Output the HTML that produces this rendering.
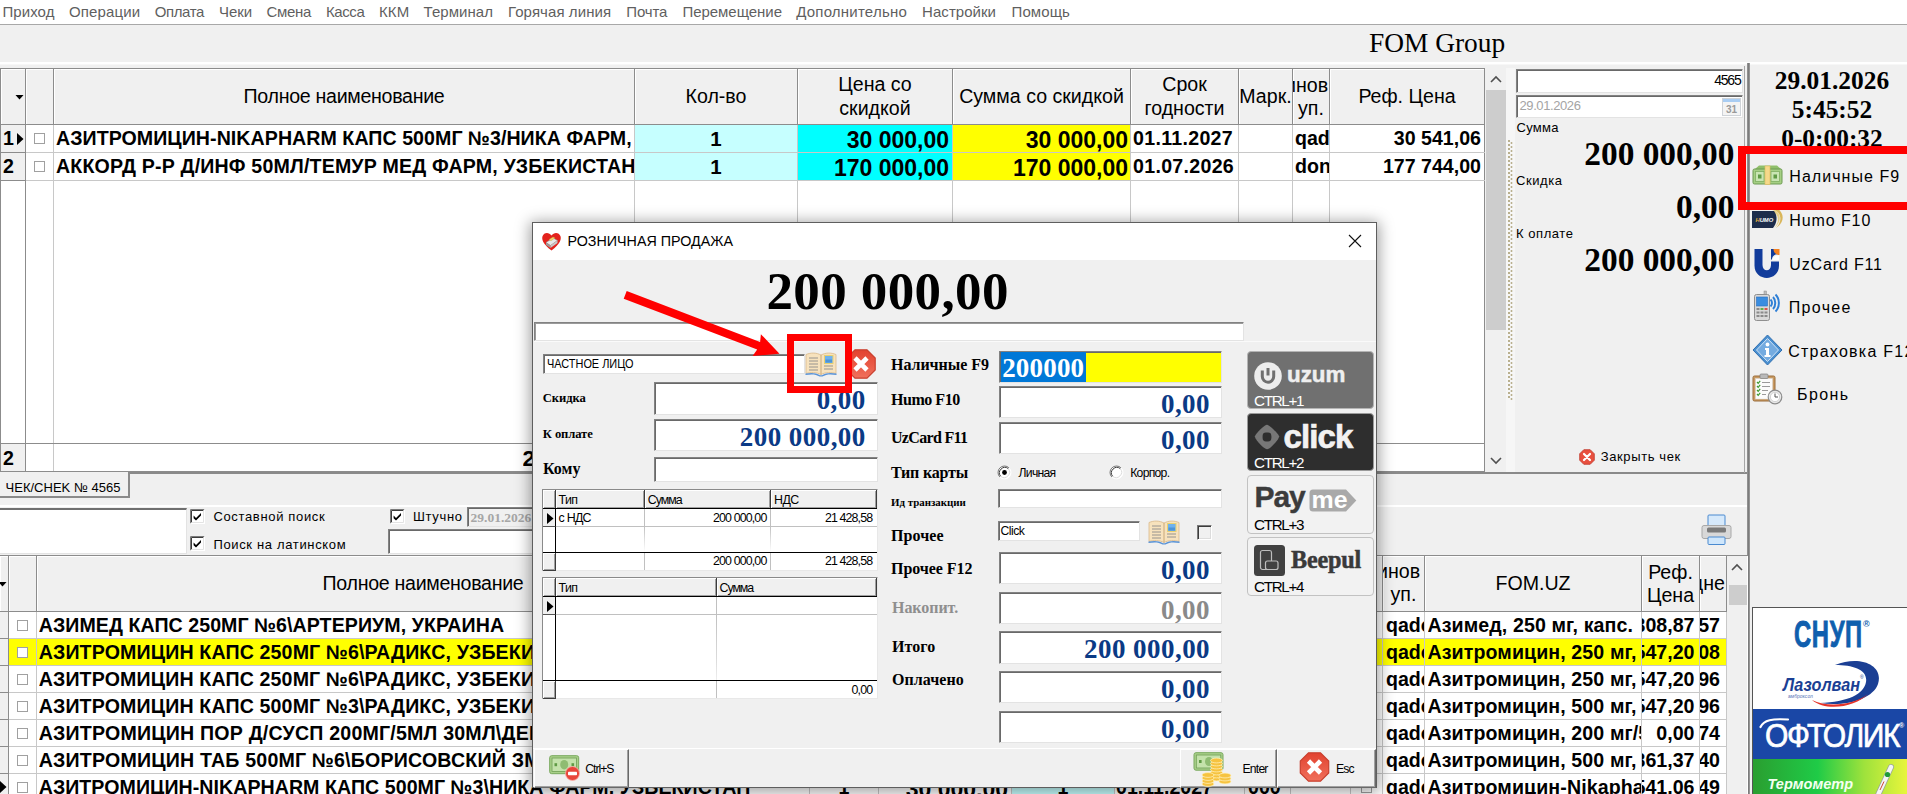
<!DOCTYPE html>
<html>
<head>
<meta charset="utf-8">
<title>FOM</title>
<style>
*{box-sizing:border-box;margin:0;padding:0}
html,body{width:1907px;height:794px;overflow:hidden;background:#f0f0f0;font-family:"Liberation Sans",sans-serif;color:#000;font-size:14px;line-height:1}
.a{position:absolute}
.t{position:absolute;white-space:pre;line-height:1}
.ser{font-family:"Liberation Serif",serif;font-weight:bold}
.sunk{position:absolute;background:#fff;border:1px solid;border-color:#828282 #e3e3e3 #e3e3e3 #828282;box-shadow:inset 1px 1px 0 #696969}
.vl{position:absolute;width:1px;background:#c8c8c8}
.hl{position:absolute;height:1px;background:#c8c8c8}
.hd{position:absolute;background:#f0f0f0;border-right:1px solid #8c8c8c;border-bottom:1px solid #8c8c8c;box-shadow:inset 1px 1px 0 #fff;text-align:center;font-size:19.6px;line-height:29px;display:flex;align-items:center;justify-content:center;overflow:hidden;white-space:pre}
.cb{position:absolute;width:11px;height:11px;border:1px solid #a0a0a0;background:#fff}
.ck{position:absolute;width:13px;height:13px;border:1px solid #333;background:#fff}
.row{position:absolute;font-weight:bold;font-size:19.6px;white-space:pre;line-height:28px;height:28px;overflow:hidden}
.tah{font-size:14px;letter-spacing:.35px}
.m{position:absolute;top:3px;font-size:15px;line-height:17px;color:#5f5f5f;white-space:pre}
</style>
</head>
<body>
<div class="a" style="left:0;top:0;width:1907px;height:24px;background:#fff"></div>
<div class="a" style="left:0;top:24px;width:1907px;height:1px;background:#a8a8a8"></div>
<div class="m" style="left:2.5px;letter-spacing:0.07px">Приход</div>
<div class="m" style="left:68.9px;letter-spacing:0.15px">Операции</div>
<div class="m" style="left:154.7px;letter-spacing:-0.38px">Оплата</div>
<div class="m" style="left:219.0px;letter-spacing:-0.07px">Чеки</div>
<div class="m" style="left:266.5px;letter-spacing:-0.32px">Смена</div>
<div class="m" style="left:326.0px;letter-spacing:-0.42px">Касса</div>
<div class="m" style="left:379.0px;letter-spacing:0.10px">ККМ</div>
<div class="m" style="left:423.5px;letter-spacing:0.06px">Терминал</div>
<div class="m" style="left:508.0px;letter-spacing:0.08px">Горячая линия</div>
<div class="m" style="left:626.3px;letter-spacing:-0.14px">Почта</div>
<div class="m" style="left:682.5px;letter-spacing:-0.05px">Перемещение</div>
<div class="m" style="left:796.2px;letter-spacing:0.22px">Дополнительно</div>
<div class="m" style="left:922.1px;letter-spacing:0.04px">Настройки</div>
<div class="m" style="left:1011.5px;letter-spacing:0.10px">Помощь</div>
<div class="a" style="left:0;top:62px;width:1907px;height:2px;background:#fff"></div>
<div class="a" style="left:0;top:64px;width:1907px;height:1px;background:#f7f7f7"></div>
<div class="t" style="left:1369px;top:29px;font-family:'Liberation Serif',serif;font-size:27.4px;line-height:28px">FOM Group</div>
<div class="a" style="left:0;top:68px;width:1485px;height:404px;background:#fff;border-top:1px solid #8c8c8c;border-left:1px solid #8c8c8c;border-right:1px solid #8c8c8c"></div>
<div class="hd" style="left:1px;width:25px;top:69px;height:56px"></div>
<div class="hd" style="left:26px;width:28px;top:69px;height:56px"></div>
<div class="hd" style="left:54px;width:581px;top:69px;height:56px"><span style="letter-spacing:-.3px">Полное наименование</span></div>
<div class="hd" style="left:635px;width:163px;top:69px;height:56px">Кол-во</div>
<div class="hd" style="left:798px;width:155px;top:69px;height:56px;line-height:23.3px">Цена со
скидкой</div>
<div class="hd" style="left:953px;width:178px;top:69px;height:56px">Сумма со скидкой</div>
<div class="hd" style="left:1131px;width:108px;top:69px;height:56px;line-height:23.3px">Срок
годности</div>
<div class="hd" style="left:1239px;width:54px;top:69px;height:56px">Марк.</div>
<div class="hd" style="left:1293px;width:37px;top:69px;height:56px;display:block;line-height:23.3px;padding-top:4.5px"><div style="margin-left:-8px;white-space:pre;width:60px;text-align:left">инов</div><div>уп.</div></div>
<div class="hd" style="left:1330px;width:155px;top:69px;height:56px">Реф. Цена</div>
<svg class="a" style="left:15px;top:94px" width="9" height="6"><path d="M0.5 1 L8.5 1 L4.5 5.5 Z" fill="#000"/></svg>
<div class="a" style="left:1px;top:125px;width:24px;height:56px;background:#f0f0f0"></div>
<div class="a" style="left:635px;top:125px;width:163px;height:56px;background:#c6ffff"></div>
<div class="a" style="left:798px;top:125px;width:155px;height:56px;background:#00ffff"></div>
<div class="a" style="left:953px;top:125px;width:178px;height:56px;background:#ffff00"></div>
<div class="vl" style="left:53px;top:125px;height:347px"></div>
<div class="vl" style="left:634px;top:125px;height:347px"></div>
<div class="vl" style="left:797px;top:125px;height:347px"></div>
<div class="vl" style="left:952px;top:125px;height:347px"></div>
<div class="vl" style="left:1130px;top:125px;height:347px"></div>
<div class="vl" style="left:1238px;top:125px;height:347px"></div>
<div class="vl" style="left:1292px;top:125px;height:347px"></div>
<div class="vl" style="left:1329px;top:125px;height:347px"></div>
<div class="vl" style="left:25px;top:125px;height:347px;background:#8c8c8c"></div>
<div class="hl" style="left:26px;top:152px;width:1459px"></div>
<div class="hl" style="left:0;top:152px;width:26px;background:#8c8c8c"></div>
<div class="hl" style="left:26px;top:180px;width:1459px"></div>
<div class="hl" style="left:0;top:180px;width:26px;background:#8c8c8c"></div>
<div class="a" style="left:1px;top:444px;width:24px;height:28px;background:#f0f0f0"></div>
<div class="hl" style="left:0;top:443px;width:1485px;background:#8c8c8c"></div>
<div class="hl" style="left:0;top:471px;width:1485px;background:#8c8c8c"></div>
<div class="row" style="left:3px;top:444px;width:20px">2</div>
<div class="row" style="left:522.5px;top:445px;width:20px;font-size:22.5px">2</div>
<div class="row" style="left:3px;top:124px;width:14px">1</div>
<div class="cb" style="left:34px;top:133px"></div>
<div class="row" style="left:56px;top:124px;width:578px;letter-spacing:0.054px">АЗИТРОМИЦИН-NIKAPHARM КАПС 500МГ №3/НИКА ФАРМ,</div>
<div class="row" style="left:635px;top:125px;width:162px;text-align:center;font-size:20.5px">1</div>
<div class="row" style="left:798px;top:126px;width:151px;text-align:right;font-size:23px">30 000,00</div>
<div class="row" style="left:953px;top:126px;width:175px;text-align:right;font-size:23px">30 000,00</div>
<div class="row" style="left:1133px;top:124px;width:105px;letter-spacing:.3px">01.11.2027</div>
<div class="row" style="left:1295px;top:124px;width:34px">qadoq</div>
<div class="row" style="left:1330px;top:124px;width:151px;text-align:right">30 541,06</div>
<div class="row" style="left:3px;top:152px;width:14px">2</div>
<div class="cb" style="left:34px;top:161px"></div>
<div class="row" style="left:56px;top:152px;width:578px;letter-spacing:0.17px">АККОРД Р-Р Д/ИНФ 50МЛ/ТЕМУР МЕД ФАРМ, УЗБЕКИСТАН</div>
<div class="row" style="left:635px;top:153px;width:162px;text-align:center;font-size:20.5px">1</div>
<div class="row" style="left:798px;top:154px;width:151px;text-align:right;font-size:23px">170 000,00</div>
<div class="row" style="left:953px;top:154px;width:175px;text-align:right;font-size:23px">170 000,00</div>
<div class="row" style="left:1133px;top:152px;width:105px;letter-spacing:.3px">01.07.2026</div>
<div class="row" style="left:1295px;top:152px;width:34px">dona</div>
<div class="row" style="left:1330px;top:152px;width:151px;text-align:right">177 744,00</div>
<svg class="a" style="left:17px;top:133px" width="7" height="12"><path d="M0 0 L6.5 6 L0 12 Z" fill="#000"/></svg>
<div class="a" style="left:1486px;top:68px;width:20px;height:404px;background:#f0f0f0"></div>
<div class="a" style="left:1486px;top:90px;width:20px;height:240px;background:#cdcdcd"></div>
<svg class="a" style="left:1489px;top:74px" width="14" height="10"><path d="M2 8 L7 3 L12 8" fill="none" stroke="#505050" stroke-width="1.6"/></svg>
<svg class="a" style="left:1489px;top:456px" width="14" height="10"><path d="M2 2 L7 7 L12 2" fill="none" stroke="#505050" stroke-width="1.6"/></svg>
<div class="a" style="left:1506px;top:68px;width:9px;height:404px;background:#f6f6f6"></div>
<div class="a" style="left:1508px;top:140px;width:5px;height:260px;background-image:radial-gradient(circle at 1px 1px,#b9b08f 0.9px,transparent 1.2px),radial-gradient(circle at 3.5px 3px,#b9b08f 0.9px,transparent 1.2px);background-size:5px 4px"></div>
<div class="a" style="left:0;top:472px;width:1748px;height:2px;background:#8a8a8a"></div>
<div class="a" style="left:1744px;top:66px;width:1px;height:407px;background:#a6a6a6"></div>
<div class="a" style="left:1747px;top:63px;width:3px;height:731px;background:linear-gradient(90deg,#9a9a9a,#7c7c7c 50%,#a0a0a0)"></div>
<div class="sunk" style="left:1516px;top:69px;width:227px;height:24px"></div>
<div class="t" style="left:1700px;top:73.4px;width:40.5px;text-align:right;font-size:14px;letter-spacing:-1.2px;line-height:14px">4565</div>
<div class="sunk" style="left:1516px;top:95px;width:227px;height:23px"></div>
<div class="t" style="left:1519.5px;top:99px;font-size:13px;letter-spacing:-.41px;color:#a4a4a4;line-height:13px">29.01.2026</div>
<svg class="a" style="left:1722px;top:98px" width="19" height="18" viewBox="0 0 19 18"><rect x="0.5" y="0.5" width="18" height="17" fill="#f4f4f4" stroke="#cfd3d8"/><rect x="1" y="1" width="17" height="3" fill="#a9cdf3"/><text x="9.5" y="14.5" font-family="Liberation Sans" font-weight="bold" font-size="10" text-anchor="middle" fill="#9a9a9a">31</text></svg>
<div class="t" style="left:1516.5px;top:121px;font-size:13px;letter-spacing:.28px;line-height:14px">Сумма</div>
<div class="t" style="left:1516px;top:174px;font-size:13px;letter-spacing:.57px;line-height:14px">Скидка</div>
<div class="t" style="left:1516px;top:227px;font-size:13px;letter-spacing:.56px;line-height:14px">К оплате</div>
<div class="t ser" style="left:1534px;top:137px;width:200.5px;text-align:right;font-size:33.4px;line-height:34px">200 000,00</div>
<div class="t ser" style="left:1534px;top:190px;width:200.5px;text-align:right;font-size:33.4px;line-height:34px">0,00</div>
<div class="t ser" style="left:1534px;top:243px;width:200.5px;text-align:right;font-size:33.4px;line-height:34px">200 000,00</div>
<svg class="a" style="left:1578.5px;top:448.5px" width="16" height="16" viewBox="0 0 16 16"><path d="M4.8 .7 H11.2 L15.3 4.8 V11.2 L11.2 15.3 H4.8 L.7 11.2 V4.8 Z" fill="#e8503f" stroke="#c0392b" stroke-width=".8"/><path d="M5 5 L11 11 M11 5 L5 11" stroke="#fff" stroke-width="2.2" stroke-linecap="round"/></svg>
<div class="t" style="left:1600.8px;top:450px;font-size:13px;letter-spacing:.6px;line-height:14px">Закрыть чек</div>
<div class="t ser" style="left:1752px;top:67px;width:160px;text-align:center;font-size:25.4px;line-height:26px">29.01.2026</div>
<div class="t ser" style="left:1752px;top:96px;width:160px;text-align:center;font-size:25.4px;line-height:26px">5:45:52</div>
<div class="t ser" style="left:1752px;top:125px;width:160px;text-align:center;font-size:25.4px;line-height:26px">0-0:00:32</div>
<div class="t" style="left:1789.3px;top:167px;font-size:16px;letter-spacing:1.05px;line-height:20px">Наличные F9</div>
<div class="t" style="left:1789.3px;top:211px;font-size:16px;letter-spacing:0.9px;line-height:20px">Humo F10</div>
<div class="t" style="left:1789.3px;top:255.3px;font-size:16px;letter-spacing:0.85px;line-height:20px">UzCard F11</div>
<div class="t" style="left:1788.8px;top:298px;font-size:16px;letter-spacing:1.32px;line-height:20px">Прочее</div>
<div class="t" style="left:1788.2px;top:342.3px;font-size:16px;letter-spacing:1.25px;line-height:20px">Страховка F12</div>
<div class="t" style="left:1797px;top:385px;font-size:16px;letter-spacing:1.4px;line-height:20px">Бронь</div>
<svg class="a" style="left:1752px;top:164px" width="31" height="22" viewBox="0 0 31 22"><path d="M3 5 L7 1.5 H25 L29 5 Z" fill="#8fbf6a"/><rect x="1" y="5" width="29" height="15" rx="1.5" fill="#a5cf84" stroke="#6d9a52"/><rect x="3.5" y="7.5" width="8.5" height="10" fill="#c9e5b3" stroke="#7fae62" stroke-width=".8"/><rect x="19" y="7.5" width="8.5" height="10" fill="#c9e5b3" stroke="#7fae62" stroke-width=".8"/><rect x="6" y="10.5" width="3.5" height="4" fill="#5f9a45"/><rect x="21.5" y="10.5" width="3.5" height="4" fill="#5f9a45"/><rect x="13" y="2" width="5" height="18.5" fill="#f6d98a" stroke="#e0b85a" stroke-width=".6"/></svg>
<svg class="a" style="left:1752px;top:209px" width="31" height="21" viewBox="0 0 31 21"><path d="M22 1 C29 3 31 12 24 19 C32 14 33 5 26 0 Z" fill="#d9b65a"/><path d="M20 2 C27 5 28 13 22 19 C30 13 29 4 23 1 Z" fill="#e8cf86"/><path d="M0 2 H22 C26 7 25 14 21 19 H0 Z" fill="#1d2d4c"/><text x="3.5" y="13" font-family="Liberation Sans" font-weight="bold" font-style="italic" font-size="5.8" fill="#fff"><tspan fill="#e0b040">H</tspan>UMO</text></svg>
<svg class="a" style="left:1753px;top:248px" width="28" height="31" viewBox="0 0 28 31"><path d="M1.5 1 H9.5 V17 C9.5 24 18 24 18 17 V13.5 H26 V17.5 C26 34 1.5 34 1.5 17.5 Z" fill="#123c9b"/><path d="M18 1 H26 V6 C21 6 19 8.5 19 11.5 H18 Z" fill="#123c9b"/><path d="M20.5 1 H26.5 V7 C23 7 20.5 4.5 20.5 1 Z" fill="#f58220"/><path d="M19.5 12 C19.5 9 22 7.5 26 7.5 V12 Z" fill="#fff"/></svg>
<svg class="a" style="left:1753px;top:290px" width="29" height="32" viewBox="0 0 29 32"><rect x="11" y="1" width="2.5" height="5" fill="#bdbdbd" stroke="#8d8d8d" stroke-width=".5"/><rect x="1.5" y="4.5" width="15" height="26" rx="2" fill="#d9d9d9" stroke="#8f8f8f"/><rect x="3.5" y="7" width="11" height="9" fill="#3a8de0" stroke="#2a6fc0" stroke-width=".6"/><g fill="#8a8a8a"><rect x="3.5" y="18" width="3" height="2"/><rect x="7.5" y="18" width="3" height="2" fill="#63b04a"/><rect x="11.5" y="18" width="3" height="2" fill="#d9534f"/><rect x="3.5" y="21.5" width="3" height="2"/><rect x="7.5" y="21.5" width="3" height="2"/><rect x="11.5" y="21.5" width="3" height="2"/><rect x="3.5" y="25" width="3" height="2"/><rect x="7.5" y="25" width="3" height="2"/><rect x="11.5" y="25" width="3" height="2"/></g><path d="M17.5 9.5 C19.5 11.3 19.5 14.7 17.5 16.5" fill="none" stroke="#2f7fd6" stroke-width="2"/><path d="M20 7 C23 10 23 16 20 19" fill="none" stroke="#2f7fd6" stroke-width="2"/><path d="M22.5 4.5 C27 9 27 17 22.5 21.5" fill="none" stroke="#2f7fd6" stroke-width="2"/></svg>
<svg class="a" style="left:1752px;top:334px" width="31" height="32" viewBox="0 0 31 32"><path d="M15.5 1 L30 16 L15.5 31 L1 16 Z" fill="#4a8fd0" stroke="#2f6fb0" stroke-linejoin="round"/><path d="M15.5 4.5 L26.5 16 L15.5 27.5 L4.5 16 Z" fill="#74abe0" stroke="#cfe3f6" stroke-width="1"/><circle cx="15.5" cy="10.5" r="1.9" fill="#fff"/><path d="M13 14 H17 V21 H18.5 V23 H12.5 V21 H14 V16 H13 Z" fill="#fff"/></svg>
<svg class="a" style="left:1752px;top:373px" width="31" height="32" viewBox="0 0 31 32"><rect x="1" y="3" width="22" height="25" rx="1.5" fill="#c89a62" stroke="#9a6d3a"/><rect x="3.5" y="5.5" width="17" height="20.5" fill="#fbfbfb" stroke="#d8d8d8" stroke-width=".5"/><rect x="8" y="1" width="8" height="4.5" rx="1" fill="#b9b9b9" stroke="#808080" stroke-width=".7"/><g stroke="#3f9a2f" stroke-width="1.2" fill="none"><path d="M5 9 l1.2 1.4 l2 -2.6"/><path d="M5 13 l1.2 1.4 l2 -2.6"/><path d="M5 17 l1.2 1.4 l2 -2.6"/><path d="M5 21 l1.2 1.4 l2 -2.6"/></g><g stroke="#9a9a9a" stroke-width="1"><path d="M10 9.5 H18"/><path d="M10 13.5 H18"/><path d="M10 17.5 H16"/><path d="M10 21.5 H14"/></g><circle cx="23" cy="24" r="6.8" fill="#e9e9e9" stroke="#8c8c8c" stroke-width="1.2"/><circle cx="23" cy="24" r="4.6" fill="#fff" stroke="#bdbdbd" stroke-width=".6"/><path d="M23 20.5 V24 H26" stroke="#555" stroke-width="1" fill="none"/></svg>
<div class="a" style="left:0;top:474px;width:130px;height:24px;background:#f0f0f0;border-right:2px solid #8a8a8a;border-bottom:2px solid #8a8a8a"></div>
<div class="a" style="left:0;top:472px;width:130px;height:2px;background:#f0f0f0"></div>
<div class="a" style="left:128px;top:472px;width:2px;height:4px;background:#8a8a8a"></div>
<div class="t" style="left:5.5px;top:481px;font-size:13px;letter-spacing:.02px;line-height:14px">ЧЕК/CHEK № 4565</div>
<div class="a" style="left:0;top:505px;width:1747px;height:2px;background:#fff"></div>
<div class="a" style="left:0;top:508px;width:187px;height:46px;background:#fff;border-top:2px solid #6f6f6f;border-right:1px solid #e3e3e3;border-bottom:1px solid #e3e3e3"></div>
<svg class="a" style="left:190px;top:509px" width="15" height="15" viewBox="0 0 15 15"><rect x="0" y="0" width="15" height="15" fill="#fff"/><path d="M0.5 14.5 V0.5 H14.5" fill="none" stroke="#7a7a7a"/><path d="M1.5 13.5 V1.5 H13.5" fill="none" stroke="#3c3c3c"/><path d="M14.5 0.5 V14.5 H0.5" fill="none" stroke="#fff"/><path d="M13.5 1.5 V13.5 H1.5" fill="none" stroke="#e3e3e3"/><path d="M3.6 6.6 L6 9 L11 4 V6.6 L6 11.6 L3.6 9.2 Z" fill="#000"/></svg>
<svg class="a" style="left:190px;top:536px" width="15" height="15" viewBox="0 0 15 15"><rect x="0" y="0" width="15" height="15" fill="#fff"/><path d="M0.5 14.5 V0.5 H14.5" fill="none" stroke="#7a7a7a"/><path d="M1.5 13.5 V1.5 H13.5" fill="none" stroke="#3c3c3c"/><path d="M14.5 0.5 V14.5 H0.5" fill="none" stroke="#fff"/><path d="M13.5 1.5 V13.5 H1.5" fill="none" stroke="#e3e3e3"/><path d="M3.6 6.6 L6 9 L11 4 V6.6 L6 11.6 L3.6 9.2 Z" fill="#000"/></svg>
<svg class="a" style="left:390px;top:509px" width="15" height="15" viewBox="0 0 15 15"><rect x="0" y="0" width="15" height="15" fill="#fff"/><path d="M0.5 14.5 V0.5 H14.5" fill="none" stroke="#7a7a7a"/><path d="M1.5 13.5 V1.5 H13.5" fill="none" stroke="#3c3c3c"/><path d="M14.5 0.5 V14.5 H0.5" fill="none" stroke="#fff"/><path d="M13.5 1.5 V13.5 H1.5" fill="none" stroke="#e3e3e3"/><path d="M3.6 6.6 L6 9 L11 4 V6.6 L6 11.6 L3.6 9.2 Z" fill="#000"/></svg>
<div class="t" style="left:213.4px;top:510px;font-size:13px;letter-spacing:.66px;line-height:14px">Составной поиск</div>
<div class="t" style="left:213.4px;top:538px;font-size:13px;letter-spacing:.66px;line-height:14px">Поиск на латинском</div>
<div class="t" style="left:413px;top:510px;font-size:13px;letter-spacing:.66px;line-height:14px">Штучно</div>
<div class="sunk" style="left:467px;top:507px;width:80px;height:20px;background:#f0f0f0"></div>
<div class="t ser" style="left:470.5px;top:510.5px;font-size:13.5px;line-height:14px;color:#a6a6a6">29.01.2026</div>
<div class="sunk" style="left:388px;top:529px;width:160px;height:25px"></div>
<svg class="a" style="left:1701px;top:514px" width="31" height="32" viewBox="0 0 31 32"><rect x="7" y="1" width="17" height="14" rx="1" fill="#d6e9fb" stroke="#4a8ad0"/><rect x="1" y="11.5" width="29" height="13" rx="2" fill="#d8d8d8" stroke="#a8a8a8"/><rect x="6" y="13.5" width="19" height="5" rx="1.5" fill="#7a7a7a"/><rect x="7" y="23" width="17" height="7.5" rx="1" fill="#cfe6fb" stroke="#4a8ad0"/></svg>
<div class="a" style="left:0;top:555px;width:1748px;height:239px;background:#fff;border-top:1px solid #8c8c8c"></div>
<div class="hd" style="left:0;width:9px;top:556px;height:56px"></div>
<div class="hd" style="left:9px;width:28px;top:556px;height:56px"></div>
<div class="hd" style="left:37px;width:773px;top:556px;height:56px"><span style="letter-spacing:-.3px">Полное наименование</span></div>
<div class="hd" style="left:810px;width:573px;top:556px;height:56px"></div>
<div class="hd" style="left:1383px;width:42px;top:556px;height:56px;display:block;line-height:23px;padding-top:4px"><div style="margin-left:-6px;width:60px;text-align:left">инов</div><div>уп.</div></div>
<div class="hd" style="left:1425px;width:217px;top:556px;height:56px">FOM.UZ</div>
<div class="hd" style="left:1642px;width:58px;top:556px;height:56px;line-height:23px">Реф.
Цена</div>
<div class="hd" style="left:1700px;width:27px;top:556px;height:56px;display:block;line-height:54px"><div style="margin-left:-8px;width:40px;text-align:left">цне</div></div>
<svg class="a" style="left:0;top:581px" width="7" height="6"><path d="M-1.5 1 L6.5 1 L2.5 5.5 Z" fill="#000"/></svg>
<div class="a" style="left:1727px;top:556px;width:20px;height:238px;background:#f0f0f0"></div>
<div class="a" style="left:1729px;top:585px;width:18px;height:20px;background:#cdcdcd"></div>
<svg class="a" style="left:1730px;top:562px" width="14" height="10"><path d="M2 8 L7 3 L12 8" fill="none" stroke="#505050" stroke-width="1.6"/></svg>
<div class="a" style="left:0;top:612px;width:8px;height:27px;background:#f0f0f0"></div>
<div class="hl" style="left:0;top:638px;width:1727px"></div>
<div class="hl" style="left:0;top:638px;width:9px;background:#8c8c8c"></div>
<div class="cb" style="left:17px;top:620px"></div>
<div class="row" style="left:38.7px;top:611px;width:770px;letter-spacing:0.06px">АЗИМЕД КАПС 250МГ №6\АРТЕРИУМ, УКРАИНА</div>
<div class="row" style="left:1386px;top:611px;width:38px">qadoq</div>
<div class="row" style="left:1427.5px;top:611px;width:213.5px;letter-spacing:.1px">Азимед, 250 мг, капс.</div>
<div class="row" style="left:1642px;top:611px;width:57px;direction:rtl"><span style="direction:ltr;unicode-bidi:embed;padding-right:4.5px">5 308,87</span></div>
<div class="row" style="left:1700px;top:611px;width:26px;direction:rtl"><span style="direction:ltr;unicode-bidi:embed;padding-right:6px">157</span></div>
<div class="a" style="left:9px;top:639px;width:1718px;height:27px;background:#ffff00"></div>
<div class="a" style="left:0;top:639px;width:8px;height:27px;background:#f0f0f0"></div>
<div class="hl" style="left:0;top:665px;width:1727px"></div>
<div class="hl" style="left:0;top:665px;width:9px;background:#8c8c8c"></div>
<div class="cb" style="left:17px;top:647px"></div>
<div class="row" style="left:38.7px;top:638px;width:770px;letter-spacing:0.14px">АЗИТРОМИЦИН КАПС 250МГ №6\РАДИКС, УЗБЕКИСТАН</div>
<div class="row" style="left:1386px;top:638px;width:38px">qadoq</div>
<div class="row" style="left:1427.5px;top:638px;width:213.5px;letter-spacing:.1px">Азитромицин, 250 мг,</div>
<div class="row" style="left:1642px;top:638px;width:57px;direction:rtl"><span style="direction:ltr;unicode-bidi:embed;padding-right:4.5px">2 547,20</span></div>
<div class="row" style="left:1700px;top:638px;width:26px;direction:rtl"><span style="direction:ltr;unicode-bidi:embed;padding-right:6px">108</span></div>
<div class="a" style="left:0;top:666px;width:8px;height:27px;background:#f0f0f0"></div>
<div class="hl" style="left:0;top:692px;width:1727px"></div>
<div class="hl" style="left:0;top:692px;width:9px;background:#8c8c8c"></div>
<div class="cb" style="left:17px;top:674px"></div>
<div class="row" style="left:38.7px;top:665px;width:770px;letter-spacing:0.14px">АЗИТРОМИЦИН КАПС 250МГ №6\РАДИКС, УЗБЕКИСТАН</div>
<div class="row" style="left:1386px;top:665px;width:38px">qadoq</div>
<div class="row" style="left:1427.5px;top:665px;width:213.5px;letter-spacing:.1px">Азитромицин, 250 мг,</div>
<div class="row" style="left:1642px;top:665px;width:57px;direction:rtl"><span style="direction:ltr;unicode-bidi:embed;padding-right:4.5px">2 547,20</span></div>
<div class="row" style="left:1700px;top:665px;width:26px;direction:rtl"><span style="direction:ltr;unicode-bidi:embed;padding-right:6px">196</span></div>
<div class="a" style="left:0;top:693px;width:8px;height:27px;background:#f0f0f0"></div>
<div class="hl" style="left:0;top:719px;width:1727px"></div>
<div class="hl" style="left:0;top:719px;width:9px;background:#8c8c8c"></div>
<div class="cb" style="left:17px;top:701px"></div>
<div class="row" style="left:38.7px;top:692px;width:770px;letter-spacing:0.14px">АЗИТРОМИЦИН КАПС 500МГ №3\РАДИКС, УЗБЕКИСТАН</div>
<div class="row" style="left:1386px;top:692px;width:38px">qadoq</div>
<div class="row" style="left:1427.5px;top:692px;width:213.5px;letter-spacing:.1px">Азитромицин, 500 мг,</div>
<div class="row" style="left:1642px;top:692px;width:57px;direction:rtl"><span style="direction:ltr;unicode-bidi:embed;padding-right:4.5px">2 547,20</span></div>
<div class="row" style="left:1700px;top:692px;width:26px;direction:rtl"><span style="direction:ltr;unicode-bidi:embed;padding-right:6px">196</span></div>
<div class="a" style="left:0;top:720px;width:8px;height:27px;background:#f0f0f0"></div>
<div class="hl" style="left:0;top:746px;width:1727px"></div>
<div class="hl" style="left:0;top:746px;width:9px;background:#8c8c8c"></div>
<div class="cb" style="left:17px;top:728px"></div>
<div class="row" style="left:38.7px;top:719px;width:770px;letter-spacing:0.2px">АЗИТРОМИЦИН ПОР Д/СУСП 200МГ/5МЛ 30МЛ\ДЕНТАФИЛЛ</div>
<div class="row" style="left:1386px;top:719px;width:38px">qadoq</div>
<div class="row" style="left:1427.5px;top:719px;width:213.5px;letter-spacing:.1px">Азитромицин, 200 мг/5</div>
<div class="row" style="left:1642px;top:719px;width:57px;direction:rtl"><span style="direction:ltr;unicode-bidi:embed;padding-right:4.5px">0,00</span></div>
<div class="row" style="left:1700px;top:719px;width:26px;direction:rtl"><span style="direction:ltr;unicode-bidi:embed;padding-right:6px">174</span></div>
<div class="a" style="left:0;top:747px;width:8px;height:27px;background:#f0f0f0"></div>
<div class="hl" style="left:0;top:773px;width:1727px"></div>
<div class="hl" style="left:0;top:773px;width:9px;background:#8c8c8c"></div>
<div class="cb" style="left:17px;top:755px"></div>
<div class="row" style="left:38.7px;top:746px;width:770px;letter-spacing:0.2px">АЗИТРОМИЦИН ТАБ 500МГ №6\БОРИСОВСКИЙ ЗМП, БЕЛАРУСЬ</div>
<div class="row" style="left:1386px;top:746px;width:38px">qadoq</div>
<div class="row" style="left:1427.5px;top:746px;width:213.5px;letter-spacing:.1px">Азитромицин, 500 мг,</div>
<div class="row" style="left:1642px;top:746px;width:57px;direction:rtl"><span style="direction:ltr;unicode-bidi:embed;padding-right:4.5px">8 361,37</span></div>
<div class="row" style="left:1700px;top:746px;width:26px;direction:rtl"><span style="direction:ltr;unicode-bidi:embed;padding-right:6px">140</span></div>
<div class="a" style="left:0;top:774px;width:8px;height:27px;background:#f0f0f0"></div>
<div class="hl" style="left:0;top:800px;width:1727px"></div>
<div class="hl" style="left:0;top:800px;width:9px;background:#8c8c8c"></div>
<div class="cb" style="left:17px;top:782px"></div>
<div class="row" style="left:38.7px;top:773px;width:770px;letter-spacing:0.05px">АЗИТРОМИЦИН-NIKAPHARM КАПС 500МГ №3\НИКА ФАРМ, УЗБЕКИСТАН</div>
<div class="row" style="left:1386px;top:773px;width:38px">qadoq</div>
<div class="row" style="left:1427.5px;top:773px;width:213.5px;letter-spacing:.1px">Азитромицин-Nikapharm</div>
<div class="row" style="left:1642px;top:773px;width:57px;direction:rtl"><span style="direction:ltr;unicode-bidi:embed;padding-right:4.5px">30 541,06</span></div>
<div class="row" style="left:1700px;top:773px;width:26px;direction:rtl"><span style="direction:ltr;unicode-bidi:embed;padding-right:6px">149</span></div>
<div class="a" style="left:1012px;top:774px;width:102px;height:27px;background:#c6ffff"></div>
<div class="row" style="left:810px;top:773px;width:68px;text-align:center">1</div>
<div class="row" style="left:880px;top:775px;width:128px;text-align:right;font-size:23px">30 000,00</div>
<div class="row" style="left:1012px;top:773px;width:102px;text-align:center">1</div>
<div class="row" style="left:1116px;top:773px;width:110px">01.11.2027</div>
<div class="row" style="left:1248px;top:773px;width:40px">000</div>
<div class="cb" style="left:1361px;top:782px"></div>
<div class="vl" style="left:8px;top:612px;height:182px;background:#8c8c8c"></div>
<div class="vl" style="left:36px;top:612px;height:182px;background:#c8c8c8"></div>
<div class="vl" style="left:809px;top:612px;height:182px;background:#c8c8c8"></div>
<div class="vl" style="left:878px;top:612px;height:182px;background:#c8c8c8"></div>
<div class="vl" style="left:1011px;top:612px;height:182px;background:#c8c8c8"></div>
<div class="vl" style="left:1114px;top:612px;height:182px;background:#c8c8c8"></div>
<div class="vl" style="left:1244px;top:612px;height:182px;background:#c8c8c8"></div>
<div class="vl" style="left:1290px;top:612px;height:182px;background:#c8c8c8"></div>
<div class="vl" style="left:1350px;top:612px;height:182px;background:#c8c8c8"></div>
<div class="vl" style="left:1382px;top:612px;height:182px;background:#c8c8c8"></div>
<div class="vl" style="left:1424px;top:612px;height:182px;background:#c8c8c8"></div>
<div class="vl" style="left:1641px;top:612px;height:182px;background:#c8c8c8"></div>
<div class="vl" style="left:1699px;top:612px;height:182px;background:#c8c8c8"></div>
<div class="vl" style="left:1726px;top:612px;height:182px;background:#c8c8c8"></div>
<svg class="a" style="left:0;top:781px" width="7" height="12"><path d="M0 0 L6.5 6 L0 12 Z" fill="#000"/></svg>
<div class="a" style="left:1752px;top:607px;width:160px;height:190px;background:#fff;border:1px solid #555"></div>
<div class="t" style="left:1793.5px;top:617px;font-size:36px;font-weight:bold;color:#0f5fae;line-height:36px;transform:scaleX(.66);transform-origin:0 0;letter-spacing:1px;-webkit-text-stroke:.9px #0f5fae">СНУП</div>
<div class="t" style="left:1863px;top:619.5px;font-size:9px;font-weight:bold;color:#0f5fae;line-height:9px">®</div>
<svg class="a" style="left:1778px;top:657px" width="110" height="52" viewBox="0 0 110 52"><path d="M57 8 C82 -2 106 8 100 27 C95 42 68 50 42 46 C70 45 86 37 88 25 C90 13 76 8 57 8 Z" fill="#1b3f94"/><path d="M34 43 C50 51 76 48 90 37 C78 50 48 55 34 43 Z" fill="#e63329"/><text x="5" y="34" font-family="Liberation Sans" font-style="italic" font-weight="bold" font-size="17.5" fill="#1b3f94" textLength="77" lengthAdjust="spacingAndGlyphs">Лазолван</text><text x="10" y="41" font-family="Liberation Sans" font-size="5" fill="#5a78b8">амброксол</text><text x="82" y="22" font-family="Liberation Sans" font-size="5" fill="#1b3f94">®</text></svg>
<div class="a" style="left:1753px;top:709px;width:154px;height:50px;background:#1a47a6"></div>
<div class="t" style="left:1764.5px;top:717px;font-size:34px;color:#fff;line-height:36px;transform:scaleX(.885);transform-origin:0 0;letter-spacing:-1.5px;-webkit-text-stroke:.7px #fff">ОФТОЛИК</div>
<svg class="a" style="left:1758px;top:716px" width="36" height="14"><path d="M2.5 11 C6 4 14 2.5 30 3.5" fill="none" stroke="#fff" stroke-width="2.2" stroke-linecap="round"/></svg>
<div class="t" style="left:1899px;top:722px;font-size:7px;font-weight:bold;color:#fff;line-height:7px">®</div>
<div class="a" style="left:1753px;top:759px;width:154px;height:35px;background:linear-gradient(90deg,#2a9e30 0%,#1fcb47 42%,#9ee23c 72%,#e8f53c 100%)"></div>
<div class="t" style="left:1767.5px;top:776.5px;font-size:14.6px;font-weight:bold;font-style:italic;color:#f4fff0;line-height:15px">Термометр</div>
<svg class="a" style="left:1870px;top:760px" width="30" height="34" viewBox="0 0 30 34"><path d="M8.5 34 L21 7" stroke="#9aa49a" stroke-width="6" stroke-linecap="round"/><path d="M8.5 34 L21 7" stroke="#f4f6f4" stroke-width="4.4" stroke-linecap="round"/><circle cx="17.5" cy="14.5" r="2.6" fill="#1d9a3a"/><path d="M10 30 L14 21.5" stroke="#d0463a" stroke-width="1"/></svg>
<div class="a" style="left:532px;top:222px;width:845px;height:566px;background:#f0f0f0;border:1px solid #5e5e5e;box-shadow:0 2px 14px 2px rgba(0,0,0,.38)"></div>
<div class="a" style="left:533px;top:223px;width:843px;height:37px;background:#fff"></div>
<svg class="a" style="left:541px;top:231px" width="21" height="21" viewBox="0 0 21 21"><path d="M10.5 19.5 C2 13 0.5 8.5 1.5 5.2 C2.8 1.2 8 0.6 10.5 4.6 C13 0.6 18.2 1.2 19.5 5.2 C20.5 8.5 19 13 10.5 19.5 Z" fill="#e3221c"/><path d="M5 11.5 L12 7 L16.5 9.5 L9.5 14.5 Z" fill="#e8e8e8" stroke="#8a8a8a" stroke-width=".5"/><path d="M5 11.5 L9.5 14.5 V17 L5 14 Z" fill="#9a9a9a"/><path d="M9.5 14.5 L16.5 9.5 V12 L9.5 17 Z" fill="#c8c8c8"/><path d="M8 8.5 L12 6 L14 7 L10 9.7 Z" fill="#f5d36a" stroke="#b89a3a" stroke-width=".4"/></svg>
<div class="t" style="left:567.5px;top:234px;font-size:14.3px;line-height:15px">РОЗНИЧНАЯ ПРОДАЖА</div>
<svg class="a" style="left:1348px;top:234px" width="14" height="14"><path d="M1 1 L13 13 M13 1 L1 13" stroke="#111" stroke-width="1.1"/></svg>
<div class="t ser" style="left:700px;top:264.6px;width:308.5px;text-align:right;font-size:53px;line-height:53px;letter-spacing:.4px"><span style="margin-right:-.4px">200 000,00</span></div>
<div class="sunk" style="left:534px;top:322px;width:710px;height:19px;box-shadow:inset 1px 1px 0 #9a9a9a"></div>
<div class="a" style="left:534px;top:341px;width:842px;height:1px;background:#fafafa"></div>
<div class="sunk" style="left:543px;top:354px;width:262px;height:20px;"></div>
<div class="t" style="left:546.5px;top:356.6px;font-size:13.4px;line-height:14px;transform:scaleX(.815);transform-origin:0 0">ЧАСТНОЕ ЛИЦО</div>
<svg class="a" style="left:805px;top:350.5px" width="32" height="26" viewBox="0 0 32 26"><path d="M1 3.5 C6 1.5 11 1.5 16 4 C21 1.5 26 1.5 31 3.5 V22.5 C26 21 21 21 16 23.5 C11 21 6 21 1 22.5 Z" fill="#f7e2bd" stroke="#d9b98a" stroke-width=".8"/><path d="M16 4 V23.5" stroke="#c9a878" stroke-width="1"/><path d="M0.5 22.5 C6 21.5 11 21.5 15 24.3 H17 C21 21.5 26 21.5 31.5 22.5 V24 C26 23 21 23 17.5 25.5 H14.5 C11 23 6 23 0.5 24 Z" fill="#5a93d6"/><g stroke="#8a8a8a" stroke-width=".9"><path d="M4 7 H13"/><path d="M4 10 H13"/><path d="M4 13 H13"/><path d="M4 16 H13"/><path d="M4 19 H13"/><path d="M19 15 H28"/><path d="M19 18 H28"/></g><rect x="19.5" y="4.5" width="8.5" height="8" fill="#6fb2ee" stroke="#e8d070" stroke-width="1"/><rect x="20.5" y="8.5" width="6.5" height="3" fill="#4d94d8"/></svg>
<svg class="a" style="left:845.5px;top:348.5px" width="30" height="30" viewBox="0 0 30 30"><defs><linearGradient id="sga" x1="0" y1="0" x2="0" y2="1"><stop offset="0" stop-color="#e2422f"/><stop offset="1" stop-color="#f0705c"/></linearGradient></defs><path d="M9 .8 H21 L29.2 9 V21 L21 29.2 H9 L.8 21 V9 Z" fill="url(#sga)" stroke="#c9402f" stroke-width="1.2"/><path d="M9 9 L21 21 M21 9 L9 21" stroke="#fff" stroke-width="4.6"/></svg>
<div class="t ser" style="left:542.8px;top:392.2px;font-size:12.6px;line-height:12.6px;letter-spacing:-0.05px;color:#000">Скидка</div>
<div class="t ser" style="left:542.8px;top:427.6px;font-size:12.6px;line-height:12.6px;letter-spacing:-0.1px;color:#000">К оплате</div>
<div class="t ser" style="left:543px;top:460.5px;font-size:16px;line-height:16px;letter-spacing:0.05px;color:#000">Кому</div>
<div class="sunk" style="left:654px;top:382px;width:224px;height:33px;"></div>
<div class="t ser" style="left:645.3px;top:387.1px;width:220px;text-align:right;font-size:27px;line-height:27px;letter-spacing:0.45px;color:#0b3a85"><span style="margin-right:-0.45px">0,00</span></div>
<div class="sunk" style="left:654px;top:418.5px;width:224px;height:32.5px;"></div>
<div class="t ser" style="left:645.3px;top:423.5px;width:220px;text-align:right;font-size:27px;line-height:27px;letter-spacing:0.45px;color:#0b3a85"><span style="margin-right:-0.45px">200 000,00</span></div>
<div class="sunk" style="left:654px;top:456.5px;width:224px;height:25.5px;"></div>
<div class="a" style="left:542px;top:489px;width:336px;height:82px;background:#fff;border:1px solid;border-color:#8a8a8a #e8e8e8 #e8e8e8 #8a8a8a"></div>
<div class="a" style="left:543px;top:490px;width:13px;height:18.5px;background:#f0f0f0;border-right:1px solid #3c3c3c;border-bottom:1px solid #3c3c3c;box-shadow:inset 1px 1px 0 #fff,inset -1px -1px 0 #a0a0a0"></div>
<div class="a" style="left:556px;top:490px;width:89px;height:18.5px;background:#f0f0f0;border-right:1px solid #3c3c3c;border-bottom:1px solid #3c3c3c;box-shadow:inset 1px 1px 0 #fff,inset -1px -1px 0 #a0a0a0"></div>
<div class="a" style="left:645px;top:490px;width:126px;height:18.5px;background:#f0f0f0;border-right:1px solid #3c3c3c;border-bottom:1px solid #3c3c3c;box-shadow:inset 1px 1px 0 #fff,inset -1px -1px 0 #a0a0a0"></div>
<div class="a" style="left:771px;top:490px;width:106px;height:18.5px;background:#f0f0f0;border-right:1px solid #3c3c3c;border-bottom:1px solid #3c3c3c;box-shadow:inset 1px 1px 0 #fff,inset -1px -1px 0 #a0a0a0"></div>
<div class="a" style="left:543px;top:508px;width:334px;height:1px;background:#000"></div>
<div class="t" style="left:558.6px;top:494.0px;font-size:12.4px;line-height:12.4px;letter-spacing:-0.6px;color:#000">Тип</div>
<div class="t" style="left:647.8px;top:494.0px;font-size:12.4px;line-height:12.4px;letter-spacing:-1.05px;color:#000">Сумма</div>
<div class="t" style="left:774px;top:494.0px;font-size:12.4px;line-height:12.4px;letter-spacing:-0.5px;color:#000">НДС</div>
<div class="a" style="left:543px;top:509px;width:13px;height:61px;background:#fff;border-right:1px solid #000"></div>
<div class="a" style="left:543px;top:509px;width:13px;height:18px;background:#f0f0f0;border-right:1px solid #000;border-bottom:1px solid #555"></div>
<svg class="a" style="left:547px;top:512.5px" width="7" height="11"><path d="M0 0 L6.5 5.5 L0 11 Z" fill="#000"/></svg>
<div class="hl" style="left:556px;top:526px;width:321px;background:#c0c0c0"></div>
<div class="vl" style="left:644px;top:509px;height:18px;background:#c0c0c0"></div>
<div class="vl" style="left:644px;top:527px;height:25px;background:linear-gradient(#c0c0c0,#e6e6e6 60%,#fff)"></div>
<div class="vl" style="left:644px;top:553px;height:17px;background:#c0c0c0"></div>
<div class="vl" style="left:770px;top:509px;height:18px;background:#c0c0c0"></div>
<div class="vl" style="left:770px;top:527px;height:25px;background:linear-gradient(#c0c0c0,#e6e6e6 60%,#fff)"></div>
<div class="vl" style="left:770px;top:553px;height:17px;background:#c0c0c0"></div>
<div class="a" style="left:543px;top:552px;width:334px;height:1px;background:#000"></div>
<div class="a" style="left:543px;top:553px;width:13px;height:17.5px;background:#f0f0f0;border-right:1px solid #3c3c3c;border-bottom:1px solid #3c3c3c;box-shadow:inset 1px 1px 0 #fff,inset -1px -1px 0 #a0a0a0"></div>
<div class="t" style="left:558.6px;top:511.5px;font-size:12.4px;line-height:12.4px;letter-spacing:-0.75px;color:#000">с НДС</div>
<div class="t" style="left:617.3px;top:511.5px;width:150px;text-align:right;font-size:12.4px;line-height:12.4px;letter-spacing:-0.85px;color:#000"><span style="margin-right:0.85px">200 000,00</span></div>
<div class="t" style="left:723.1px;top:511.5px;width:150px;text-align:right;font-size:12.4px;line-height:12.4px;letter-spacing:-0.87px;color:#000"><span style="margin-right:0.87px">21 428,58</span></div>
<div class="t" style="left:617.3px;top:555.0px;width:150px;text-align:right;font-size:12.4px;line-height:12.4px;letter-spacing:-0.85px;color:#000"><span style="margin-right:0.85px">200 000,00</span></div>
<div class="t" style="left:723.1px;top:555.0px;width:150px;text-align:right;font-size:12.4px;line-height:12.4px;letter-spacing:-0.87px;color:#000"><span style="margin-right:0.87px">21 428,58</span></div>
<div class="a" style="left:542px;top:577px;width:336px;height:122px;background:#fff;border:1px solid;border-color:#8a8a8a #e8e8e8 #e8e8e8 #8a8a8a"></div>
<div class="a" style="left:543px;top:578px;width:13px;height:18.5px;background:#f0f0f0;border-right:1px solid #3c3c3c;border-bottom:1px solid #3c3c3c;box-shadow:inset 1px 1px 0 #fff,inset -1px -1px 0 #a0a0a0"></div>
<div class="a" style="left:556px;top:578px;width:161px;height:18.5px;background:#f0f0f0;border-right:1px solid #3c3c3c;border-bottom:1px solid #3c3c3c;box-shadow:inset 1px 1px 0 #fff,inset -1px -1px 0 #a0a0a0"></div>
<div class="a" style="left:717px;top:578px;width:160px;height:18.5px;background:#f0f0f0;border-right:1px solid #3c3c3c;border-bottom:1px solid #3c3c3c;box-shadow:inset 1px 1px 0 #fff,inset -1px -1px 0 #a0a0a0"></div>
<div class="a" style="left:543px;top:596px;width:334px;height:1px;background:#000"></div>
<div class="t" style="left:558.6px;top:582.0px;font-size:12.4px;line-height:12.4px;letter-spacing:-0.6px;color:#000">Тип</div>
<div class="t" style="left:719.5px;top:582.0px;font-size:12.4px;line-height:12.4px;letter-spacing:-1.05px;color:#000">Сумма</div>
<div class="a" style="left:543px;top:597px;width:13px;height:83px;background:#fff;border-right:1px solid #000"></div>
<div class="a" style="left:543px;top:597px;width:13px;height:18px;background:#f0f0f0;border-right:1px solid #000;border-bottom:1px solid #555"></div>
<svg class="a" style="left:547px;top:600.5px" width="7" height="11"><path d="M0 0 L6.5 5.5 L0 11 Z" fill="#000"/></svg>
<div class="hl" style="left:556px;top:614px;width:321px;background:#c0c0c0"></div>
<div class="vl" style="left:716px;top:597px;height:18px;background:#c0c0c0"></div>
<div class="vl" style="left:716px;top:615px;height:65px;background:linear-gradient(#c0c0c0,#dcdcdc 70%,#eee)"></div>
<div class="vl" style="left:716px;top:681px;height:17px;background:#c0c0c0"></div>
<div class="a" style="left:543px;top:680px;width:334px;height:1px;background:#000"></div>
<div class="a" style="left:543px;top:681px;width:13px;height:17.5px;background:#f0f0f0;border-right:1px solid #3c3c3c;border-bottom:1px solid #3c3c3c;box-shadow:inset 1px 1px 0 #fff,inset -1px -1px 0 #a0a0a0"></div>
<div class="t" style="left:723.1px;top:683.5px;width:150px;text-align:right;font-size:12.4px;line-height:12.4px;letter-spacing:-0.85px;color:#000"><span style="margin-right:0.85px">0,00</span></div>
<div class="t ser" style="left:891px;top:356.8px;font-size:16px;line-height:16px;letter-spacing:-0.05px;color:#000">Наличные F9</div>
<div class="t ser" style="left:891px;top:391.8px;font-size:16px;line-height:16px;letter-spacing:-0.47px;color:#000">Humo F10</div>
<div class="t ser" style="left:891px;top:429.6px;font-size:16px;line-height:16px;letter-spacing:-0.68px;color:#000">UzCard F11</div>
<div class="t ser" style="left:891px;top:464.5px;font-size:16px;line-height:16px;letter-spacing:-0.2px;color:#000">Тип карты</div>
<div class="t ser" style="left:891px;top:497.2px;font-size:10.9px;line-height:10.9px;letter-spacing:0px;color:#000">Ид транзакции</div>
<div class="t ser" style="left:891px;top:527.8px;font-size:16px;line-height:16px;letter-spacing:0.1px;color:#000">Прочее</div>
<div class="t ser" style="left:891px;top:560.8px;font-size:16px;line-height:16px;letter-spacing:-0.05px;color:#000">Прочее F12</div>
<div class="t ser" style="left:892px;top:599.8px;font-size:16px;line-height:16px;letter-spacing:-0.05px;color:#8e8e8e">Накопит.</div>
<div class="t ser" style="left:892px;top:639.2px;font-size:16px;line-height:16px;letter-spacing:0.05px;color:#000">Итого</div>
<div class="t ser" style="left:892px;top:672.4px;font-size:16px;line-height:16px;letter-spacing:0.05px;color:#000">Оплачено</div>
<div class="sunk" style="left:998.5px;top:350.5px;width:223.5px;height:32.5px;background:#ffff00"></div>
<div class="a" style="left:1001px;top:352px;width:85px;height:30px;background:#0078d7"></div>
<div class="t ser" style="left:1002.2px;top:354.8px;font-size:27px;line-height:27px;letter-spacing:.18px;color:#fff">200000</div>
<div class="sunk" style="left:998.5px;top:385.5px;width:223.5px;height:32px;"></div>
<div class="t ser" style="left:989.5999999999999px;top:390.5px;width:220px;text-align:right;font-size:27px;line-height:27px;letter-spacing:0.45px;color:#0b3a85"><span style="margin-right:-0.45px">0,00</span></div>
<div class="sunk" style="left:998.5px;top:421.5px;width:223.5px;height:32.5px;"></div>
<div class="t ser" style="left:989.5999999999999px;top:426.8px;width:220px;text-align:right;font-size:27px;line-height:27px;letter-spacing:0.45px;color:#0b3a85"><span style="margin-right:-0.45px">0,00</span></div>
<svg class="a" style="left:997.2px;top:465.2px" width="15" height="15" viewBox="0 0 15 15"><circle cx="7.5" cy="7.5" r="6.4" fill="#fff"/><path d="M2.9 12.1 A6.5 6.5 0 0 1 12.1 2.9" fill="none" stroke="#7a7a7a" stroke-width="1"/><path d="M3.7 11.3 A5.4 5.4 0 0 1 11.3 3.7" fill="none" stroke="#3a3a3a" stroke-width="1"/><path d="M12.1 2.9 A6.5 6.5 0 0 1 2.9 12.1" fill="none" stroke="#fff" stroke-width="1"/><path d="M11.3 3.7 A5.4 5.4 0 0 1 3.7 11.3" fill="none" stroke="#dcdcdc" stroke-width="1"/><circle cx="7.5" cy="7.5" r="2.4" fill="#000"/></svg>
<svg class="a" style="left:1109.2px;top:465.2px" width="15" height="15" viewBox="0 0 15 15"><circle cx="7.5" cy="7.5" r="6.4" fill="#fff"/><path d="M2.9 12.1 A6.5 6.5 0 0 1 12.1 2.9" fill="none" stroke="#7a7a7a" stroke-width="1"/><path d="M3.7 11.3 A5.4 5.4 0 0 1 11.3 3.7" fill="none" stroke="#3a3a3a" stroke-width="1"/><path d="M12.1 2.9 A6.5 6.5 0 0 1 2.9 12.1" fill="none" stroke="#fff" stroke-width="1"/><path d="M11.3 3.7 A5.4 5.4 0 0 1 3.7 11.3" fill="none" stroke="#dcdcdc" stroke-width="1"/></svg>
<div class="t" style="left:1018.6px;top:466.7px;font-size:12.2px;line-height:12.2px;letter-spacing:-0.75px;color:#000">Личная</div>
<div class="t" style="left:1130.2px;top:466.7px;font-size:12.2px;line-height:12.2px;letter-spacing:-0.72px;color:#000">Корпор.</div>
<div class="sunk" style="left:997.5px;top:488.5px;width:224px;height:19.5px;"></div>
<div class="sunk" style="left:997.5px;top:521px;width:142px;height:19.5px;"></div>
<div class="t" style="left:1000.5px;top:524.7px;font-size:12.2px;line-height:12.2px;letter-spacing:-0.5px;color:#000">Click</div>
<svg class="a" style="left:1148px;top:518.5px" width="32" height="26" viewBox="0 0 32 26"><path d="M1 3.5 C6 1.5 11 1.5 16 4 C21 1.5 26 1.5 31 3.5 V22.5 C26 21 21 21 16 23.5 C11 21 6 21 1 22.5 Z" fill="#f7e2bd" stroke="#d9b98a" stroke-width=".8"/><path d="M16 4 V23.5" stroke="#c9a878" stroke-width="1"/><path d="M0.5 22.5 C6 21.5 11 21.5 15 24.3 H17 C21 21.5 26 21.5 31.5 22.5 V24 C26 23 21 23 17.5 25.5 H14.5 C11 23 6 23 0.5 24 Z" fill="#5a93d6"/><g stroke="#8a8a8a" stroke-width=".9"><path d="M4 7 H13"/><path d="M4 10 H13"/><path d="M4 13 H13"/><path d="M4 16 H13"/><path d="M4 19 H13"/><path d="M19 15 H28"/><path d="M19 18 H28"/></g><rect x="19.5" y="4.5" width="8.5" height="8" fill="#6fb2ee" stroke="#e8d070" stroke-width="1"/><rect x="20.5" y="8.5" width="6.5" height="3" fill="#4d94d8"/></svg>
<div class="a" style="left:1197px;top:524.5px;width:15px;height:15px;background:#f0f0f0;border:1px solid;border-color:#7a7a7a #fff #fff #7a7a7a;box-shadow:inset 1px 1px 0 #3c3c3c,inset -1px -1px 0 #dcdcdc"></div>
<div class="sunk" style="left:998.5px;top:551.5px;width:223.5px;height:32.5px;"></div>
<div class="t ser" style="left:989.5999999999999px;top:556.8px;width:220px;text-align:right;font-size:27px;line-height:27px;letter-spacing:0.45px;color:#0b3a85"><span style="margin-right:-0.45px">0,00</span></div>
<div class="sunk" style="left:998.5px;top:591.5px;width:223.5px;height:32.5px;"></div>
<div class="t ser" style="left:989.5999999999999px;top:596.8px;width:220px;text-align:right;font-size:27px;line-height:27px;letter-spacing:0.45px;color:#8a8a8a"><span style="margin-right:-0.45px">0,00</span></div>
<div class="sunk" style="left:998.5px;top:631px;width:223.5px;height:32.5px;"></div>
<div class="t ser" style="left:989.5999999999999px;top:636.0px;width:220px;text-align:right;font-size:27px;line-height:27px;letter-spacing:0.45px;color:#0b3a85"><span style="margin-right:-0.45px">200 000,00</span></div>
<div class="sunk" style="left:998.5px;top:671px;width:223.5px;height:32px;"></div>
<div class="t ser" style="left:989.5999999999999px;top:675.8px;width:220px;text-align:right;font-size:27px;line-height:27px;letter-spacing:0.45px;color:#0b3a85"><span style="margin-right:-0.45px">0,00</span></div>
<div class="sunk" style="left:998.5px;top:710.5px;width:223.5px;height:32.5px;"></div>
<div class="t ser" style="left:989.5999999999999px;top:715.6px;width:220px;text-align:right;font-size:27px;line-height:27px;letter-spacing:0.45px;color:#0b3a85"><span style="margin-right:-0.45px">0,00</span></div>
<div class="a" style="left:1246.5px;top:350.5px;width:127px;height:58px;background:#707070;border:1px solid #b4b4b4;border-radius:4px"></div>
<svg class="a" style="left:1254px;top:362px" width="28" height="28" viewBox="0 0 28 28"><circle cx="14" cy="14" r="13.8" fill="#ededed"/><path d="M8.3 8.5 V14.5 A5.7 5.7 0 0 0 19.7 14.5 V8.5" fill="none" stroke="#707070" stroke-width="3"/><path d="M14 6 V13.5" stroke="#707070" stroke-width="3"/></svg>
<div class="t" style="left:1286.6px;top:361.9px;font-size:22.6px;line-height:26px;font-weight:bold;color:#efefef;letter-spacing:0;transform:scaleX(.99);transform-origin:0 0;-webkit-text-stroke:.5px #efefef">uzum</div>
<div class="t" style="left:1254px;top:392.7px;font-size:15.2px;line-height:15.2px;letter-spacing:-1.3px;color:#fff">CTRL+1</div>
<div class="a" style="left:1246.5px;top:413px;width:127px;height:58px;background:#2e2e2e;border:1px solid #9a9a9a;border-radius:4px"></div>
<svg class="a" style="left:1253.5px;top:424.3px" width="26" height="26" viewBox="0 0 26 26"><path d="M13 0.8 C15 0.8 24.2 9 25.2 12.5 C24.2 16.5 16 25.2 13 25.2 C10 25.2 1.8 16.5 0.8 12.5 C1.8 9 11 0.8 13 0.8 Z" fill="#777"/><rect x="8.6" y="8.6" width="8.8" height="8.8" rx="3.4" fill="#2e2e2e"/></svg>
<div class="t" style="left:1283.5px;top:420px;font-size:33px;line-height:34px;font-weight:bold;color:#f2f2f2;letter-spacing:-.9px;-webkit-text-stroke:.7px #f2f2f2">click</div>
<div class="t" style="left:1254px;top:454.5px;font-size:15.2px;line-height:15.2px;letter-spacing:-1.3px;color:#fff">CTRL+2</div>
<div class="a" style="left:1246.5px;top:474.5px;width:127px;height:59px;background:#f2f2f2;border:1px solid #c2c2c2;border-radius:4px"></div>
<div class="t" style="left:1254.5px;top:480.8px;font-size:30px;line-height:31px;font-weight:bold;color:#3c3c3c;letter-spacing:-1.1px;-webkit-text-stroke:.4px #3c3c3c">Pay</div>
<svg class="a" style="left:1308.5px;top:489px" width="48" height="23" viewBox="0 0 48 23"><path d="M4 0.5 H37 L47.3 11.5 L37 22.5 H4 Q0.5 22.5 0.5 19 V4 Q0.5 0.5 4 0.5 Z" fill="#a9a9a9"/><text x="2.5" y="19.3" font-family="Liberation Sans" font-weight="bold" font-size="23.5" fill="#fff" textLength="36" lengthAdjust="spacingAndGlyphs">me</text></svg>
<div class="t" style="left:1254px;top:517.1px;font-size:15.2px;line-height:15.2px;letter-spacing:-1.3px;color:#000">CTRL+3</div>
<div class="a" style="left:1246.5px;top:537px;width:127px;height:58.5px;background:#f2f2f2;border:1px solid #c2c2c2;border-radius:4px"></div>
<svg class="a" style="left:1254px;top:544.5px" width="31" height="31" viewBox="0 0 31 31"><rect x="0" y="0" width="31" height="31" rx="3.5" fill="#414141"/><rect x="6.5" y="5.5" width="11" height="19" rx="2" fill="none" stroke="#bdbdbd" stroke-width="1.2"/><rect x="11.5" y="16" width="12.5" height="8.5" rx="2" fill="#414141" stroke="#bdbdbd" stroke-width="1.2"/></svg>
<div class="t ser" style="left:1291px;top:546.5px;font-size:24.2px;line-height:25px;color:#3a3a3a;letter-spacing:-.2px;-webkit-text-stroke:.5px #3a3a3a">Beepul</div>
<div class="t" style="left:1254px;top:578.8px;font-size:15.2px;line-height:15.2px;letter-spacing:-1.3px;color:#000">CTRL+4</div>
<div class="a" style="left:533px;top:748px;width:843px;height:1px;background:#fff"></div>
<div class="a" style="left:534px;top:749px;width:94.5px;height:38.5px;background:#f0f0f0;border:1px solid;border-color:#fff #696969 #696969 #fff;box-shadow:inset -1px -1px 0 #a0a0a0"></div>
<div class="a" style="left:1179.5px;top:749px;width:97.5px;height:38.5px;background:#f0f0f0;border:1px solid;border-color:#fff #696969 #696969 #fff;box-shadow:inset -1px -1px 0 #a0a0a0"></div>
<div class="a" style="left:1277px;top:749px;width:98.5px;height:38.5px;background:#f0f0f0;border:1px solid;border-color:#fff #696969 #696969 #fff;box-shadow:inset -1px -1px 0 #a0a0a0"></div>
<svg class="a" style="left:548.5px;top:754.5px" width="32" height="26" viewBox="0 0 32 26"><rect x="0.7" y="0.7" width="29" height="18" rx="2" fill="#a9d08a" stroke="#78a85c"/><rect x="3" y="3" width="24.5" height="13.5" fill="#c4e2ab" stroke="#6f9f55" stroke-width=".8"/><ellipse cx="15.2" cy="9.7" rx="4" ry="4.8" fill="#8fbc72"/><rect x="5.5" y="8.2" width="2.6" height="3" fill="#5f9a45"/><rect x="22.5" y="8.2" width="2.6" height="3" fill="#5f9a45"/><circle cx="23.5" cy="18.5" r="7" fill="#e8453a" stroke="#f7b3ad" stroke-width=".8"/><rect x="19" y="16.8" width="9" height="3.4" rx=".8" fill="#fff"/></svg>
<div class="t" style="left:585.3px;top:762.7px;font-size:12.2px;line-height:12.2px;letter-spacing:-1.0px;color:#000">Ctrl+S</div>
<svg class="a" style="left:1193px;top:752px" width="40" height="36" viewBox="0 0 40 36"><rect x="1" y="0.7" width="29" height="17.5" rx="2" fill="#a9d08a" stroke="#78a85c"/><rect x="3.3" y="3" width="24.5" height="13" fill="#c4e2ab" stroke="#6f9f55" stroke-width=".8"/><ellipse cx="16" cy="9.5" rx="4" ry="4.6" fill="#8fbc72"/><rect x="6" y="8" width="2.6" height="3" fill="#5f9a45"/><g fill="#f6c340" stroke="#fff3c4" stroke-width=".7"><g id="cs"><ellipse cx="23.5" cy="26.5" rx="6" ry="2.4"/><ellipse cx="23.5" cy="23.5" rx="6" ry="2.4"/><ellipse cx="23.5" cy="20.5" rx="6" ry="2.4"/><ellipse cx="23.5" cy="17.5" rx="6" ry="2.4"/><ellipse cx="23.5" cy="14.5" rx="6" ry="2.4"/><ellipse cx="23.5" cy="11.5" rx="6" ry="2.4"/><ellipse cx="23.5" cy="8.5" rx="6" ry="2.4"/></g><ellipse cx="32" cy="29.5" rx="6" ry="2.4"/><ellipse cx="32" cy="26.5" rx="6" ry="2.4"/><ellipse cx="32" cy="23.5" rx="6" ry="2.4"/><ellipse cx="15" cy="32" rx="6" ry="2.4"/><ellipse cx="15" cy="29" rx="6" ry="2.4"/><ellipse cx="15" cy="26" rx="6" ry="2.4"/><ellipse cx="15" cy="23" rx="6" ry="2.4"/></g></svg>
<div class="t" style="left:1242.5px;top:762.5px;font-size:12.2px;line-height:12.2px;letter-spacing:-0.8px;color:#000">Enter</div>
<svg class="a" style="left:1298.5px;top:752px" width="31" height="30" viewBox="0 0 30 30"><defs><linearGradient id="sgb" x1="0" y1="0" x2="0" y2="1"><stop offset="0" stop-color="#e2422f"/><stop offset="1" stop-color="#f0705c"/></linearGradient></defs><path d="M9 .8 H21 L29.2 9 V21 L21 29.2 H9 L.8 21 V9 Z" fill="url(#sgb)" stroke="#c9402f" stroke-width="1.2"/><path d="M9 9 L21 21 M21 9 L9 21" stroke="#fff" stroke-width="4.6"/></svg>
<div class="t" style="left:1336px;top:762.5px;font-size:12.2px;line-height:12.2px;letter-spacing:-0.9px;color:#000">Esc</div>
<div class="a" style="left:1738px;top:146px;width:190px;height:63.5px;border:8px solid #ff0000"></div>
<div class="a" style="left:787.3px;top:334px;width:64.7px;height:58.8px;border:7.6px solid #ff0000"></div>
<svg class="a" style="left:600px;top:280px" width="200" height="90"><polygon points="23.7,18.7 26.7,11.1 160.1,61.9 160.9,54.2 179.5,73.7 152.6,75.9 157.2,69.6" fill="#ff0000"/></svg>
</body>
</html>
